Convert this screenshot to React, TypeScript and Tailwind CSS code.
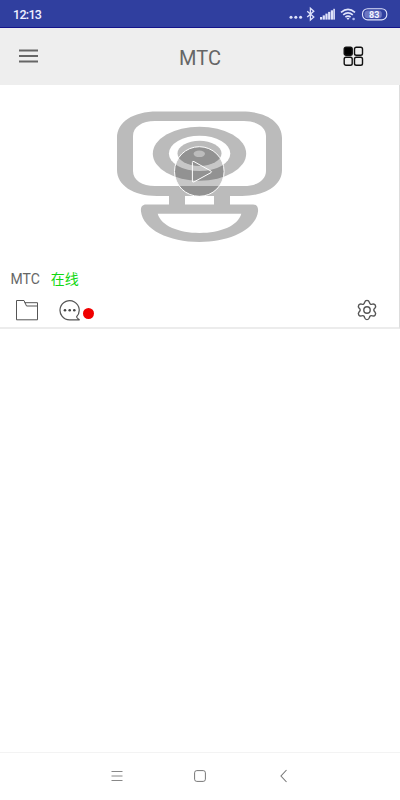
const ROBOTO = "font-['Roboto','Noto_Sans_CJK_SC',sans-serif]";

function StatusIcons() {
  return (
    <svg width="100" height="20" viewBox="288 4 100 20" fill="none" aria-hidden="true">
      <g fill="#dfe3fb">
        <circle cx="291" cy="17.3" r="1.5" />
        <circle cx="295.8" cy="17.3" r="1.5" />
        <circle cx="300.6" cy="17.3" r="1.5" />
      </g>
      <path d="M307.2 11.2l6.6 5.8-3.4 3V8.2l3.4 3-6.6 5.8" stroke="#dfe3fb" strokeWidth="1.3" />
      {/* Signal */}
      <g fill="#dfe3fb">
        <rect x="320" y="17" width="2.2" height="2.6" />
        <rect x="322.7" y="15.4" width="2.2" height="4.2" />
        <rect x="325.4" y="13.6" width="2.2" height="6" />
        <rect x="328.1" y="11.9" width="2.2" height="7.7" />
        <rect x="330.8" y="10.3" width="2.2" height="9.3" />
        <rect x="333.3" y="8.8" width="1.6" height="10.8" />
      </g>
      {/* Wi-Fi */}
      <g stroke="#dfe3fb" strokeWidth="1.7">
        <path d="M341 12.3q7-6 14 0" />
        <path d="M343.2 14.8q4.8-4 9.6 0" />
        <path d="M345.4 17.2q2.6-2.1 5.2 0" />
      </g>
      <path d="M346.5 18.2q1.5-1 3 0l-1.5 1.9z" fill="#dfe3fb" />
      <circle cx="353.6" cy="19" r="1.3" fill="#aeb8ee" />
      <rect x="362.5" y="8.7" width="24.3" height="11.2" rx="5.2" stroke="#dfe3fb" strokeWidth="1.1" />
      <rect x="364.4" y="10.4" width="17.5" height="7.8" rx="3.5" fill="#6c76c2" />
      <text
        x="374.2"
        y="17.6"
        textAnchor="middle"
        className="font-['Roboto',sans-serif] text-[9px] font-bold"
        fill="#f4f5ff"
      >
        83
      </text>
    </svg>
  );
}

function Camera() {
  return (
    <svg width="168" height="134" viewBox="116 110 168 134" fill="none" aria-hidden="true">
      <g fill="#bbbbbb">
        <path
          fillRule="evenodd"
          d="M157 111.5H242C266 111.5 282 122 282 138V170C282 185 266 196 242 196H157C133 196 117 185 117 170V138C117 122 133 111.5 157 111.5ZM155 121C142 121 133 127 133 136V171C133 180 142 186 155 186H244C257 186 266 180 266 171V136C266 127 257 121 244 121Z"
        />
        <path d="M169 195h16v9.5h29V195h16v9.5h23c4 0 5.5 3 5 7-2 18-28 30.5-58.5 30.5S143 229.5 141 211.500c-.5-4 1-7 5-7h23z" />
        <ellipse cx="199.5" cy="153.7" rx="46.7" ry="27" />
      </g>
      <path d="M157.7 213.8H241.3C238 226 220 233 199.5 233S161 226 157.7 213.8Z" fill="#fff" />
      <ellipse cx="199.6" cy="153.4" rx="30.7" ry="17.7" fill="#fff" />
      <ellipse cx="199.5" cy="153.4" rx="22" ry="12.6" fill="#bbbbbb" />
      {/* Play button */}
      <circle cx="199.3" cy="171.5" r="24.8" fill="#000" fillOpacity=".22" stroke="#fff" />
      <ellipse cx="199.3" cy="153.8" rx="5.7" ry="3.3" fill="#bcbcbc" />
      <path
        d="M192.4 162.5v18.4q0 1.8 1.6 1l17-9.3q1.2-.8 0-1.5l-17-9.5q-1.6-.9-1.6.9z"
        stroke="#fff"
      />
    </svg>
  );
}

function GearIcon() {
  return (
    <svg
      width="22"
      height="22"
      viewBox="-11 -11 22 22"
      fill="none"
      stroke="#555"
      strokeWidth="1.4"
      strokeLinejoin="round"
    >
      <path d="M-2.4-7.6Q-1.8-9.6 0-9.6T2.4-7.6Q2.9-5 5.4-5.9Q7.4-6.4 8.3-4.8T7.8-1.7Q5.8 0 7.8 1.7Q9.2 3.2 8.3 4.8T5.4 5.9Q2.9 5 2.4 7.6Q1.8 9.6 0 9.6T-2.4 7.6Q-2.9 5-5.4 5.9Q-7.4 6.4-8.3 4.8T-7.8 1.7Q-5.8 0-7.8-1.7Q-9.2-3.2-8.3-4.8T-5.4-5.9Q-2.9-5-2.4-7.6Z" />
      <circle r="3.2" />
    </svg>
  );
}

export default function App() {
  return (
    <div className={`flex h-[800px] w-[400px] flex-col overflow-hidden bg-white ${ROBOTO}`}>
      <div className="flex h-7 shrink-0 items-center justify-between border-b border-[#14148a] bg-[#303f9f] pl-[13px] pr-3">
        <span className="pt-[3px] text-[12.5px] font-medium leading-none tracking-[-0.7px] text-[#eef0ff]">
          12:13
        </span>
        <StatusIcons />
      </div>

      <header className="grid h-[57px] shrink-0 grid-cols-3 items-center bg-[#eeeeee]">
        <button aria-label="Menu" className="ml-[19px] w-[19px] pb-px">
          <svg width="19" height="14" viewBox="0 0 19 14" stroke="#666" strokeWidth="1.8">
            <path d="M0 1.5h19M0 7h19M0 12.5h19" />
          </svg>
        </button>
        <h1 className="pt-0.5 text-center text-[20px] text-[#666]">MTC</h1>
        <button aria-label="Grid view" className="mr-[36px] justify-self-end pb-px">
          <svg width="21" height="20" viewBox="0 0 21 20" fill="none" stroke="#111" strokeWidth="1.4">
            <rect x="1.2" y="1.2" width="8" height="8" rx="1.8" fill="#000" />
            <rect x="11.5" y="1.2" width="8" height="8" rx="1.8" />
            <rect x="1.2" y="11.2" width="8" height="8" rx="1.8" />
            <rect x="11.5" y="11.2" width="8" height="8" rx="1.8" />
          </svg>
        </button>
      </header>

      {/* Device card */}
      <section className="flex h-[244px] shrink-0 flex-col border-b-2 border-r border-b-[#ececec] border-r-[#dddddd]">
        <div className="flex h-[184px] pl-[116px] pt-[25px]">
          <Camera />
        </div>
        <div className="flex h-5 items-center gap-[11px] pl-[10.5px] text-[14px] leading-5">
          <span className="text-[#666]">MTC</span>
          <span className="text-[#12d812]">在线</span>
        </div>
        <div className="flex items-center pl-[15px] pr-[21px] pt-[10px]">
          <svg width="24" height="22" viewBox="15 299 24 22" fill="none" stroke="#555">
            <path d="M16.5 300.5h7.500l2.5 5.5h11v13.8h-21z" />
            <path d="M24.5 302.7h13v3.3" />
          </svg>
          <svg className="ml-5" width="22" height="22" viewBox="59 299 22 22" fill="none">
            <path
              d="M76.4 317A9.6 9.6 0 1 0 69.6 319.8H79.6Q77.8 319 76.4 317"
              stroke="#555"
              strokeWidth="1.2"
            />
            <g fill="#444">
              <circle cx="65" cy="310.3" r="1.3" />
              <circle cx="69.7" cy="310.3" r="1.3" />
              <circle cx="74.3" cy="310.3" r="1.3" />
            </g>
          </svg>
          <span className="ml-0.5 mt-[7px] size-[11px] rounded-full bg-[#f00000]" />
          <button aria-label="Settings" className="ml-auto">
            <GearIcon />
          </button>
        </div>
      </section>

      <main className="flex-1" />

      <nav className="flex h-12 shrink-0 items-center justify-center gap-[71px] border-t border-[#f3f3f3] pb-0.5">
        <svg width="12" height="12" viewBox="0 0 12 12" stroke="#888">
          <path d="M.5 1.5h11M.5 6h11M.5 10.5h11" />
        </svg>
        <svg width="12" height="12" viewBox="0 0 12 12" fill="none" stroke="#777">
          <rect x=".6" y=".6" width="10.8" height="10.8" rx="2.2" />
        </svg>
        <svg width="12" height="14" viewBox="0 0 12 14" fill="none" stroke="#777" strokeWidth="1.1">
          <path d="M9.5 1L4 7l5.500 6" />
        </svg>
      </nav>
    </div>
  );
}
